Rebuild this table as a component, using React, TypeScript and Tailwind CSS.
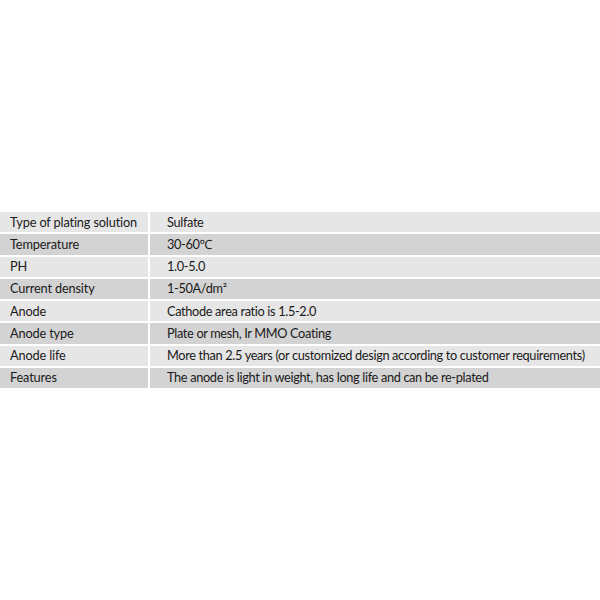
import React from 'react';

const rows = [
  { label: 'Type of plating solution', value: 'Sulfate' },
  { label: 'Temperature', value: '30-60℃' },
  { label: 'PH', value: '1.0-5.0' },
  { label: 'Current density', value: '1-50A/dm²' },
  { label: 'Anode', value: 'Cathode area ratio is 1.5-2.0' },
  { label: 'Anode type', value: 'Plate or mesh, Ir MMO Coating' },
  { label: 'Anode life', value: 'More than 2.5 years (or customized design according to customer requirements)' },
  { label: 'Features', value: 'The anode is light in weight, has long life and can be re-plated' },
];

const App: React.FC = () => {
  return (
    <div className="w-[600px] h-[600px] bg-white flex items-center">
      <div className="w-full flex flex-col gap-y-[2px] text-[12.75px] text-[#1a1a1a] font-['Lato','Noto_Sans',sans-serif]">
        {rows.map((row, i) => (
          <div
            key={row.label}
            className={`flex h-[20.25px] items-center ${i % 2 === 0 ? 'bg-[#e6e6e6]' : 'bg-[#d3d3d3]'}`}
          >
            {/* Label column */}
            <div className="w-[150px] h-full flex items-center pl-[10px] border-r-2 border-white shrink-0 tracking-[-0.15px]">
              {row.label}
            </div>
            {/* Value column */}
            <div className="flex-1 h-full flex items-center pl-[17px] whitespace-nowrap tracking-[-0.34px]">
              {row.value}
            </div>
          </div>
        ))}
      </div>
    </div>
  );
};

export default App;
